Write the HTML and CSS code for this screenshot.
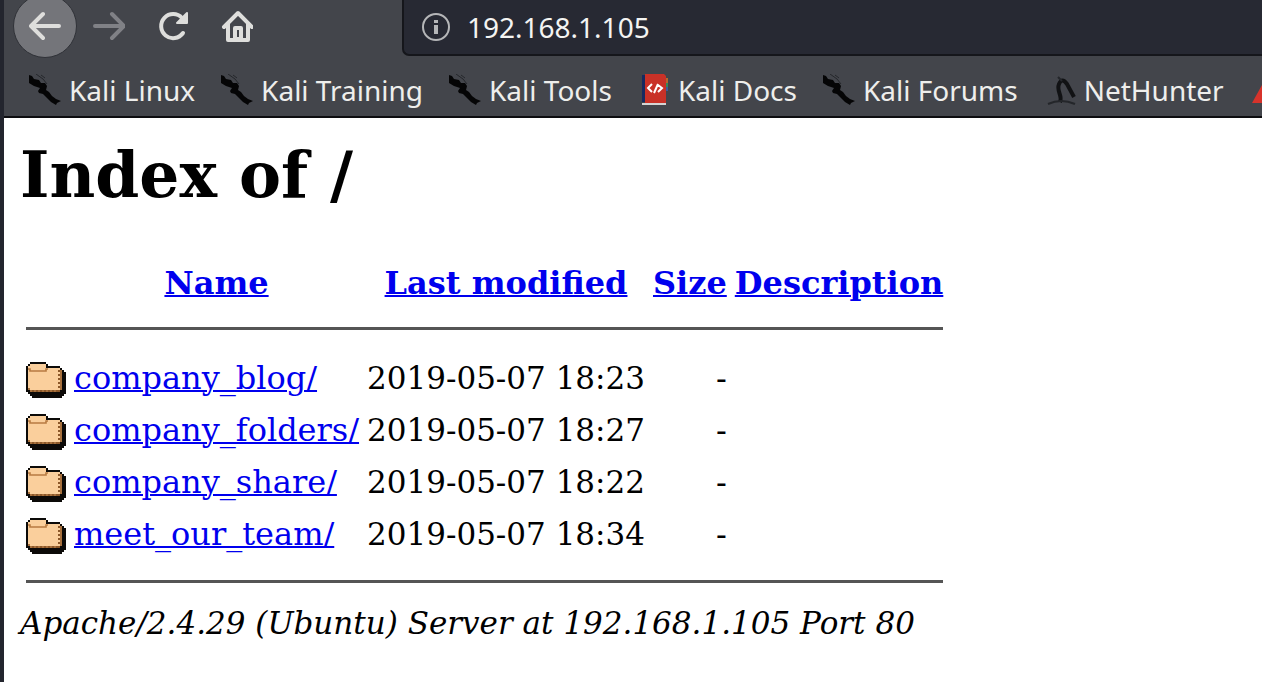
FILE: index.html
```html
<!DOCTYPE html>
<html lang="en">
<head>
<meta charset="utf-8">
<title>Index of /</title>
<link rel="stylesheet" href="styles.css">
</head>
<body>
<svg class="defs" aria-hidden="true">
  <symbol id="kali" viewBox="0 0 32 32">
    <path d="M0 1 3 2 5 5 10 6 12 9 16 9 18 12 17 16 20 18 23 22 27 25 32 27 28 29 27 31 22 28 18 24 14 20 10 19 9 17 11 14 5 12 0 9z" fill="#050506"/>
    <path d="M7 0 14 5 18 10M12 1l4 3" fill="none" stroke="#25272b" stroke-width="1"/>
  </symbol>
  <symbol id="folder" viewBox="0 0 20 22">
    <path d="M2 3h8v1h1v1h6v1h1v1h1v1h1v11h-1v1h-1v1H3v-1H2v-1H1v-1H0V5h1V4h1z" fill="#0c0a08"/>
    <path d="M2 4h8v2h7v1h1v10h-1v1H2v-1H1V5h1z" fill="#a8713d"/>
    <path d="M2 4h8v2h7v11H2v-1H1V5h1z" fill="#facf9c"/>
    <path d="M1 6.500h1v1h8v-1h1" fill="none" stroke="#b87b42" stroke-width=".8"/>
    <path d="M3 17.500h14M16.500 7v11" fill="none" stroke="#8c5829" stroke-dasharray="1 1"/>
  </symbol>
</svg>
<div class="window">
  <header class="chrome">
    <div class="toolbar">
      <button class="nav back" type="button" aria-label="Back"><svg viewBox="0 0 32 32"><path d="M30 16H3M14 4 2 16l12 12"/></svg></button>
      <button class="nav forward" type="button" aria-label="Forward"><svg viewBox="0 0 32 32"><path d="M2 16h28M19 4l12 12-12 12"/></svg></button>
      <button class="nav" type="button" aria-label="Reload"><svg viewBox="0 0 32 32"><path d="M25 8A12 12 0 1 0 26 23"/><path class="solid" d="M30 3v10H20z"/></svg></button>
      <button class="nav" type="button" aria-label="Home"><svg viewBox="0 0 32 32"><path d="M3 17 17 3l14 14M7 14v16h20V14"/><path d="M14 29V18h6v11z"/></svg></button>
      <div class="address">
        <svg class="info" viewBox="0 0 28 28" aria-hidden="true"><circle cx="14" cy="14" r="13"/><path class="mark" d="M14 12v9M14 7v3"/></svg>
        <input type="text" aria-label="Address" value="192.168.1.105">
      </div>
    </div>
    <nav class="bookmarks" aria-label="Bookmarks">
      <a href="#"><svg viewBox="0 0 32 32"><use href="#kali"/></svg>Kali Linux</a>
      <a href="#"><svg viewBox="0 0 32 32"><use href="#kali"/></svg>Kali Training</a>
      <a href="#"><svg viewBox="0 0 32 32"><use href="#kali"/></svg>Kali Tools</a>
      <a href="#"><svg viewBox="0 0 32 32"><path d="M4 1h5v27H4z" fill="#172a60"/><path d="M7 0h19l2 2v27H7z" fill="#c93127"/><path d="M4 29h24v2H4z" fill="#d5d5d5"/><path d="M28 4h2v5h-2z" fill="#b8672e"/><path d="M28 9h2v4h-2z" fill="#36885a"/><path d="M28 13h2v4h-2z" fill="#3f5b9a"/><path d="M14 10l-4 4 4 4M20 10l-4 9M20 11l4 3-4 4" fill="none" stroke="#fff" stroke-width="2"/></svg>Kali Docs</a>
      <a href="#"><svg viewBox="0 0 32 32"><use href="#kali"/></svg>Kali Forums</a>
      <a href="#"><svg viewBox="0 0 32 32"><path d="M16 28C19 22 12 17 15 10Q18 3 23 10L30 23" fill="none" stroke="#111214" stroke-width="4"/><path d="M4 30q13-6 27 0M14 3l4 4" fill="none" stroke="#24262a" stroke-width="2"/></svg>NetHunter</a>
      <a href="#" aria-label="More bookmarks"><svg viewBox="0 0 32 32"><path d="M18 0 34 29H2z" fill="#d7332b"/></svg></a>
    </nav>
  </header>
  <main class="page">
    <h1>Index of /</h1>
    <table>
      <tr><th></th><th><a href="#">Name</a></th><th><a href="#">Last modified</a></th><th><a href="#">Size</a></th><th><a href="#">Description</a></th></tr>
      <tr><td colspan="5"><hr></td></tr>
      <tr><td><svg class="folder" role="img" aria-label="Folder"><use href="#folder"/></svg></td><td><a href="#">company_blog/</a></td><td class="date">2019-05-07 18:23</td><td class="size">-</td><td></td></tr>
      <tr><td><svg class="folder" role="img" aria-label="Folder"><use href="#folder"/></svg></td><td><a href="#">company_folders/</a></td><td class="date">2019-05-07 18:27</td><td class="size">-</td><td></td></tr>
      <tr><td><svg class="folder" role="img" aria-label="Folder"><use href="#folder"/></svg></td><td><a href="#">company_share/</a></td><td class="date">2019-05-07 18:22</td><td class="size">-</td><td></td></tr>
      <tr><td><svg class="folder" role="img" aria-label="Folder"><use href="#folder"/></svg></td><td><a href="#">meet_our_team/</a></td><td class="date">2019-05-07 18:34</td><td class="size">-</td><td></td></tr>
      <tr><td colspan="5"><hr class="end"></td></tr>
    </table>
    <address>Apache/2.4.29 (Ubuntu) Server at 192.168.1.105 Port 80</address>
  </main>
</div>
</body>
</html>
```
FILE: styles.css
```css
* { box-sizing: border-box; }
body { margin: 0; background: #fff; overflow: hidden; }
.defs { display: none; }
.window {
  min-height: 100vh;
  border-left: 4px solid #23252e;
}
.chrome {
  background: #43454b;
  border-bottom: 2px solid #0d0d10;
  font: 28px/40px "Noto Sans", sans-serif;
  color: #eeeeec;
}
.toolbar {
  display: flex;
  height: 56px;
  padding-left: 9px;
}
.nav {
  flex: none;
  width: 64px;
  height: 64px;
  margin-top: -6px;
  padding: 0;
  display: grid;
  place-items: center;
  background: none;
  border: 0;
  border-radius: 50%;
}
.nav svg {
  width: 32px;
  height: 32px;
  fill: none;
  stroke: #dededc;
  stroke-width: 4;
  stroke-linecap: round;
  stroke-linejoin: round;
}
.nav .solid { fill: #dededc; stroke-width: 2; }
.back { background: #74757a; border: 1px solid #303238; }
.forward svg { stroke: #808186; }
.address {
  flex: 1;
  display: flex;
  align-items: center;
  gap: 17px;
  margin-left: 133px;
  padding-left: 18px;
  background: #272933;
  border: 2px solid #15161b;
  border-width: 0 0 2px 2px;
  border-bottom-left-radius: 7px;
}
.info {
  flex: none;
  width: 28px;
  height: 28px;
  fill: none;
  stroke: #b5b6b8;
  stroke-width: 2;
}
.info .mark { stroke-width: 4; }
.address input {
  flex: 1;
  min-width: 0;
  padding: 0;
  border: 0;
  background: none;
  font: inherit;
  color: #f4f4f2;
  outline: 0;
}
.bookmarks {
  display: flex;
  align-items: center;
  gap: 26px;
  height: 60px;
  padding: 7px 0 0 25px;
  overflow: hidden;
}
.bookmarks a {
  flex: none;
  display: flex;
  align-items: center;
  gap: 8px;
  color: inherit;
  text-decoration: none;
}
.bookmarks svg { flex: none; width: 32px; height: 32px; }
.page {
  padding: 19px 16px;
  font: 31px/36px "DejaVu Serif", serif;
  color: #000;
}
h1 { margin: 0 0 46px; font-size: 63px; line-height: 76px; }
table { border-spacing: 4px; font-size: 32px; }
th, td { padding: 2px; white-space: nowrap; }
.page a { color: #0000ee; text-decoration-thickness: 2px; }
hr { height: 3px; margin: 18px 0; border: 0; background: #555; }
.end { margin: 16px 0; }
.folder { display: block; width: 40px; height: 44px; }
.date { font-size: 31px; }
.size { text-align: right; }
address { font-style: italic; white-space: nowrap; }
```
